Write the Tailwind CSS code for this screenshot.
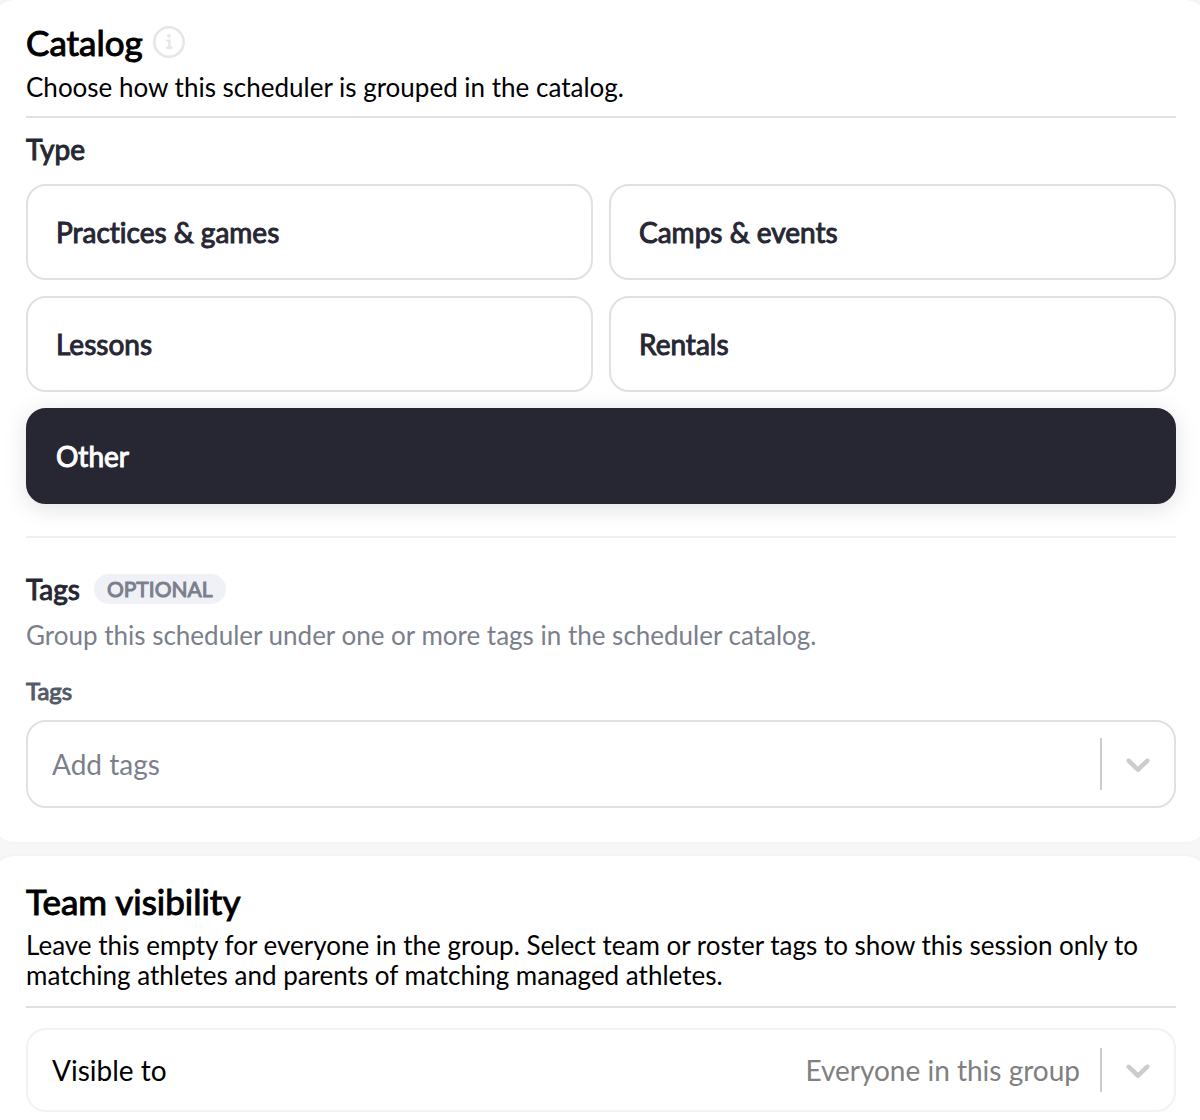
<!DOCTYPE html>
<html lang="en">
<head>
    <meta charset="UTF-8">
    <meta name="viewport" content="width=device-width, initial-scale=1.0">
    <title>Scheduler settings</title>
    <script src="https://cdn.jsdelivr.net/npm/@tailwindcss/browser@4"></script>
</head>
<body class="bg-[#f7f7f7] overflow-x-hidden font-['Lato',sans-serif] [font-variant-ligatures:none] text-black">
    <main class="-mx-1.5 flex flex-col gap-3.5">

        <!-- Catalog -->
        <section class="bg-white rounded-[20px] shadow-[0_0_4px_rgba(0,0,0,0.04)] pl-8 pr-[30px] pt-6 pb-[34px]">
            <div class="flex items-center gap-2.5">
                <h2 class="text-[35px] leading-[36px] [-webkit-text-stroke:1px]">Catalog</h2>
                <button type="button" aria-label="About the catalog" class="text-[#e6e6ea]">
                    <svg class="size-8" viewBox="0 0 32 32" fill="none" stroke="currentColor">
                        <circle cx="16" cy="16" r="14.7" stroke-width="2.6" />
                        <circle cx="16" cy="9.8" r="1.9" fill="currentColor" stroke="none" />
                        <path d="M13.4 14.6h3v6.8M12.8 21.8h6.6" stroke-width="2.4" />
                    </svg>
                </button>
            </div>
            <p class="mt-3 text-[26px] leading-[30px]">Choose how this scheduler is grouped in the catalog.</p>
            <hr class="mt-3.5 border-t-2 border-[#e0e0e5]">

            <h3 class="mt-3.5 text-[28px] leading-[34px] text-[#262733] [-webkit-text-stroke:1px]">Type</h3>
            <div class="mt-[18px] grid grid-cols-2 gap-4 text-[28px] leading-[34px] text-[#262733] [-webkit-text-stroke:1px]">
                <button type="button" class="h-24 px-7 rounded-[20px] border-2 border-[#e0e0e5] text-left">Practices &amp; games</button>
                <button type="button" class="h-24 px-7 rounded-[20px] border-2 border-[#e0e0e5] text-left">Camps &amp; events</button>
                <button type="button" class="h-24 px-7 rounded-[20px] border-2 border-[#e0e0e5] text-left">Lessons</button>
                <button type="button" class="h-24 px-7 rounded-[20px] border-2 border-[#e0e0e5] text-left">Rentals</button>
                <button type="button" aria-pressed="true" class="col-span-2 h-24 px-7 rounded-[20px] border-2 border-[#262733] bg-[#262733] text-white text-left shadow-[0_4px_24px_rgba(0,0,0,0.12)]">Other</button>
            </div>

            <hr class="mt-8 border-t-2 border-[#eeeeee]">

            <div class="mt-[34px] flex items-center gap-3.5">
                <h3 class="text-[28px] leading-[34px] text-[#262733] [-webkit-text-stroke:1px]">Tags</h3>
                <span class="px-[13px] rounded-full bg-[#f0f1f6] text-[21px] leading-[30px] text-[#7b7f8c] [-webkit-text-stroke:1px]">OPTIONAL</span>
            </div>
            <p class="mt-3.5 text-[26px] leading-[30px] text-[#7b7f8c]">Group this scheduler under one or more tags in the scheduler catalog.</p>
            <label for="tags" class="mt-[26px] block text-[24px] leading-[30px] text-[#555a68] [-webkit-text-stroke:1px]">Tags</label>
            <div class="mt-3.5 flex h-[88px] items-center rounded-[20px] border-2 border-[#e0e0e5]">
                <input id="tags" type="text" placeholder="Add tags" class="min-w-0 flex-1 pl-6 text-[28px] leading-[34px] placeholder:text-[#7b7f8c] outline-none">
                <span class="h-[52px] w-0.5 bg-[#cccccc]"></span>
                <button type="button" aria-label="Show tags" class="p-4 text-[#cccccc]">
                    <svg class="size-10" viewBox="0 0 20 20" fill="currentColor">
                        <path d="M4.516 7.548c.436-.446 1.043-.481 1.576 0L10 11.295l3.908-3.747c.533-.481 1.141-.446 1.574 0 .436.445.408 1.197 0 1.615-.406.418-4.695 4.502-4.695 4.502a1.095 1.095 0 0 1-1.576 0S4.924 9.581 4.516 9.163s-.436-1.17 0-1.615z" />
                    </svg>
                </button>
            </div>
        </section>

        <!-- Team visibility -->
        <section class="bg-white rounded-[20px] shadow-[0_0_4px_rgba(0,0,0,0.04)] pl-8 pr-[30px] pt-[26px] pb-8">
            <h2 class="text-[35px] leading-[38px] [-webkit-text-stroke:1px]">Team visibility</h2>
            <p class="mt-2.5 text-[26px] leading-[30px]">Leave this empty for everyone in the group. Select team or roster tags to show this session only to matching athletes and parents of matching managed athletes.</p>
            <hr class="mt-4 border-t-2 border-[#e0e0e5]">

            <div class="mt-5 flex h-[84px] items-center rounded-[20px] border-2 border-[#f2f2f2] text-[28px] leading-[34px]">
                <label for="visible" class="flex-1 pl-6">Visible to</label>
                <select id="visible" class="appearance-none pr-5 text-right text-[#808080] outline-none">
                    <option>Everyone in this group</option>
                </select>
                <span class="h-11 w-0.5 bg-[#cccccc]"></span>
                <span class="px-4 text-[#cccccc]">
                    <svg class="size-10" viewBox="0 0 20 20" fill="currentColor">
                        <path d="M4.516 7.548c.436-.446 1.043-.481 1.576 0L10 11.295l3.908-3.747c.533-.481 1.141-.446 1.574 0 .436.445.408 1.197 0 1.615-.406.418-4.695 4.502-4.695 4.502a1.095 1.095 0 0 1-1.576 0S4.924 9.581 4.516 9.163s-.436-1.17 0-1.615z" />
                    </svg>
                </span>
            </div>
        </section>
    </main>
</body>
</html>
